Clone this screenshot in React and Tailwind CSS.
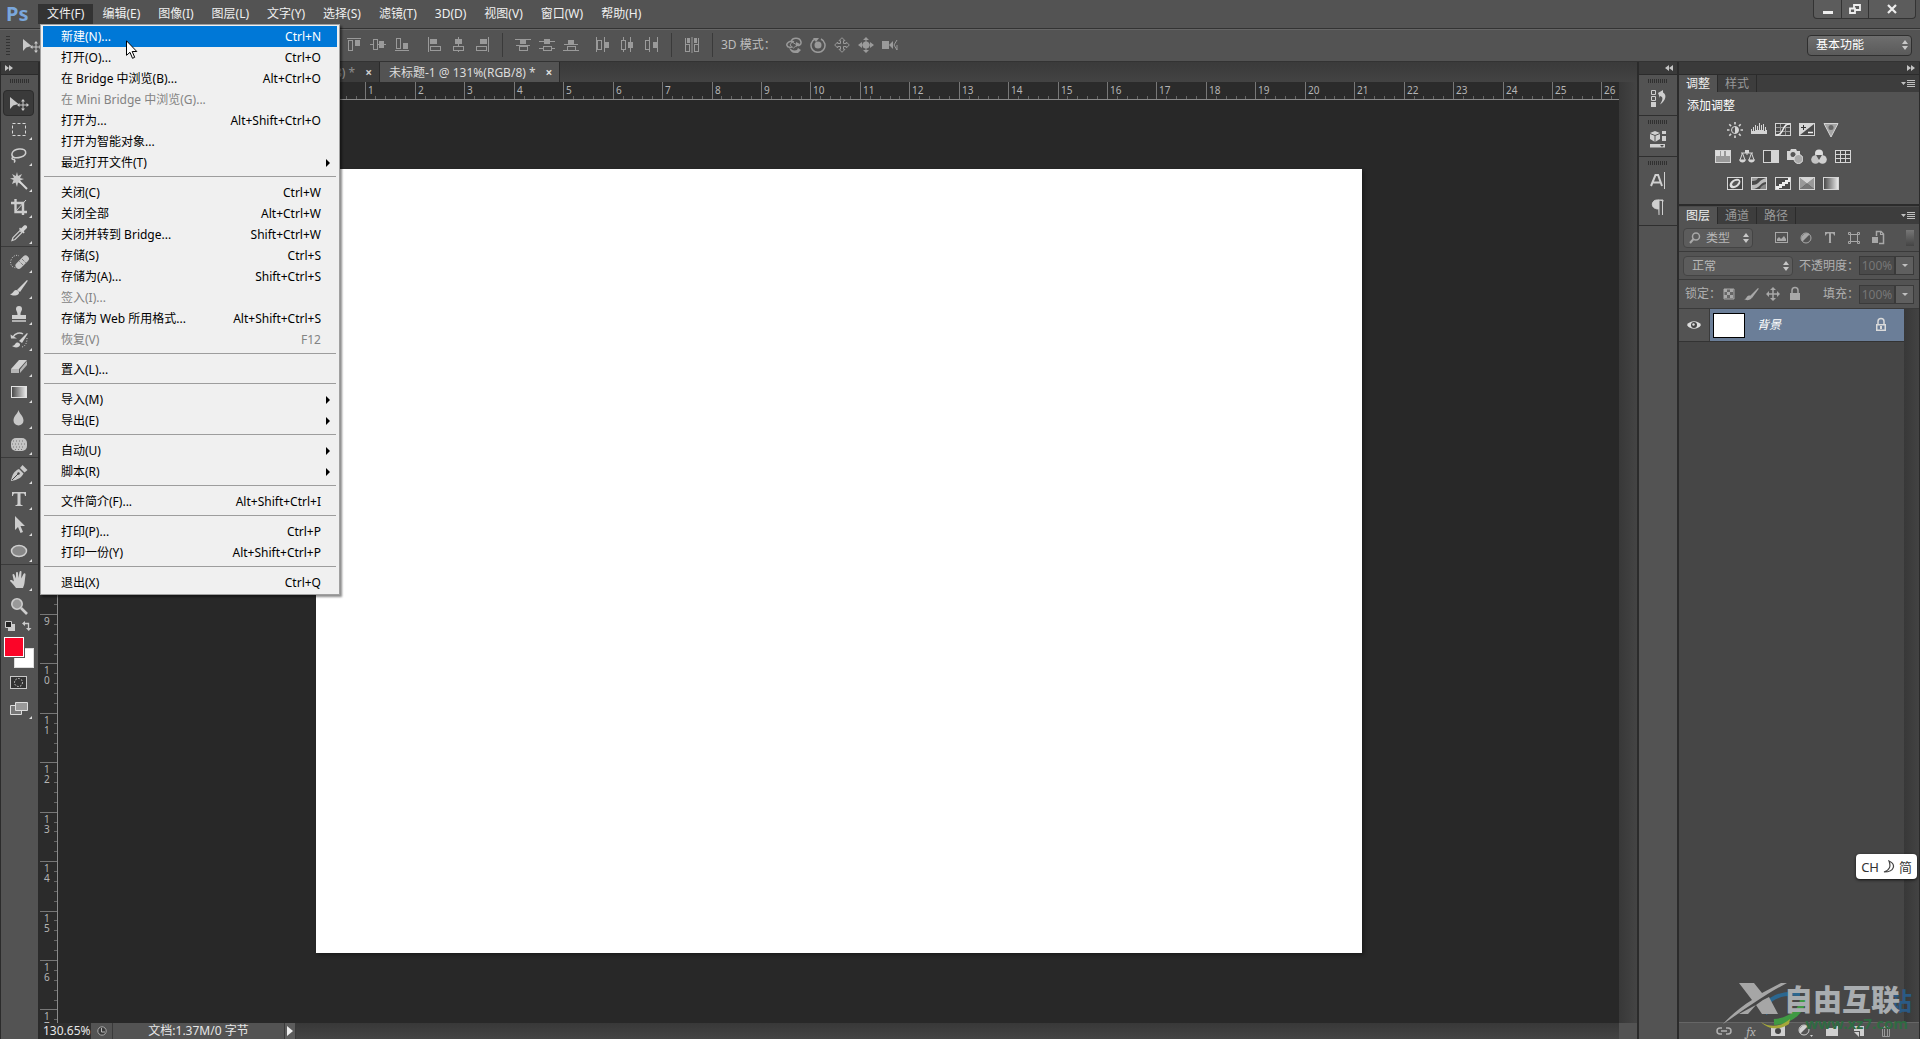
import React from "react";

const menus = ["文件(F)", "编辑(E)", "图像(I)", "图层(L)", "文字(Y)", "选择(S)", "滤镜(T)", "3D(D)", "视图(V)", "窗口(W)", "帮助(H)"];

const fileMenu = [
  [
    { label: "新建(N)...", keys: "Ctrl+N", active: true },
    { label: "打开(O)...", keys: "Ctrl+O" },
    { label: "在 Bridge 中浏览(B)...", keys: "Alt+Ctrl+O" },
    { label: "在 Mini Bridge 中浏览(G)...", disabled: true },
    { label: "打开为...", keys: "Alt+Shift+Ctrl+O" },
    { label: "打开为智能对象..." },
    { label: "最近打开文件(T)", sub: true },
  ],
  [
    { label: "关闭(C)", keys: "Ctrl+W" },
    { label: "关闭全部", keys: "Alt+Ctrl+W" },
    { label: "关闭并转到 Bridge...", keys: "Shift+Ctrl+W" },
    { label: "存储(S)", keys: "Ctrl+S" },
    { label: "存储为(A)...", keys: "Shift+Ctrl+S" },
    { label: "签入(I)...", disabled: true },
    { label: "存储为 Web 所用格式...", keys: "Alt+Shift+Ctrl+S" },
    { label: "恢复(V)", keys: "F12", disabled: true },
  ],
  [{ label: "置入(L)..." }],
  [
    { label: "导入(M)", sub: true },
    { label: "导出(E)", sub: true },
  ],
  [
    { label: "自动(U)", sub: true },
    { label: "脚本(R)", sub: true },
  ],
  [{ label: "文件简介(F)...", keys: "Alt+Shift+Ctrl+I" }],
  [
    { label: "打印(P)...", keys: "Ctrl+P" },
    { label: "打印一份(Y)", keys: "Alt+Shift+Ctrl+P" },
  ],
  [{ label: "退出(X)", keys: "Ctrl+Q" }],
];

// 20x20 drawings
const toolArt = {
  移动: (
    <>
      <path d="M1 4v12l3.200-3.500L9.500 11z" fill="#c8c8c8" />
      <path d="M14 7.500v9M9.500 12h9" stroke="#c8c8c8" fill="none" />
      <path d="M14 6l2 2.500h-4zM14 18l2-2.500h-4zM8 12l2.500-2v4zM20 12l-2.500-2v4z" fill="#c8c8c8" />
    </>
  ),
  矩形选框: <rect x="3.500" y="4.500" width="13" height="12" fill="none" stroke="#d8d8d8" strokeDasharray="3 2" />,
  套索: (
    <path d="M6 13C1 11 2 5 10 4c8-.8 9 6 2 8-3 1-6 .8-7 .3-2-.8-3 2.200-.5 2.200 2 0 1.500 2 .5 3" fill="none" stroke="#cfcfcf" strokeWidth="1.500" />
  ),
  魔棒: (
    <>
      <path d="M8 1l1 4 4-2-2 4 4 1-4 1.500 1.500 3.500L9 11.500 8 16l-1.500-4.500L3 13l1.500-4L1 7.500l4-.8L3 3l3.800 2z" fill="#c8c8c8" />
      <path d="M10 10l8 8" stroke="#d8d8d8" strokeWidth="2" />
    </>
  ),
  裁剪: (
    <>
      <path d="M6.500 2v13H18M2 6h12v12" fill="none" stroke="#cdcdcd" strokeWidth="2.400" />
      <path d="M7 14l10-11" stroke="#cdcdcd" />
    </>
  ),
  吸管: (
    <>
      <path d="M3 17.500l1-3L11 7.500l2 2-7 7z" fill="none" stroke="#cdcdcd" strokeWidth="1.200" />
      <path d="M10 6l4.500 4.500 1.200-1.200-1-1 3-3c1.500-2-1-4-2.700-2.700l-3 3-1-1z" fill="#d2d2d2" />
    </>
  ),
  修复画笔: (
    <>
      <path d="M9 15.500C3 17 0 12 2.500 7 4 3.500 8 2.500 10 4" fill="none" stroke="#cdcdcd" strokeDasharray="1 1.500" />
      <rect x="5" y="7" width="16" height="6.500" rx="3" transform="rotate(-45 13 10)" fill="#c6c6c6" />
      <path d="M10.500 9.500l3.500 3.500M13 7l3.500 3.500" stroke="#555" strokeDasharray="1 1" />
    </>
  ),
  画笔: (
    <>
      <path d="M8 12L18 2l.8.8L11 14z" fill="#d2d2d2" />
      <path d="M1 16c3 .3 3-3.500 6-4 3 0 4 3 2 4.500-2 1.500-6 1.500-8-.5z" fill="#d2d2d2" />
    </>
  ),
  仿制图章: (
    <>
      <path d="M10 2a3 3 0 0 1 3 3c0 2-1.500 2.500-1.500 6H17v4H3v-4h5.500C8.500 7.500 7 7 7 5a3 3 0 0 1 3-3z" fill="#cfcfcf" />
      <path d="M3 17h14" stroke="#cfcfcf" strokeWidth="1.500" />
    </>
  ),
  历史记录画笔: (
    <>
      <path d="M10 11l8-8 .8.800L13 13zM3 16c3 0 3-3 5-3.500 3 0 4 2.500 2 4-2 1.500-5 1-7-.5z" fill="#d2d2d2" />
      <path d="M4 7c2-4 7-5 10-3" fill="none" stroke="#cdcdcd" strokeWidth="1.500" />
      <path d="M1.500 4.500L8 8.500H2z" fill="#cdcdcd" />
      <path d="M18 8c0 4-1 8-5 9" fill="none" stroke="#cdcdcd" strokeDasharray="1 1.500" />
    </>
  ),
  橡皮擦: (
    <>
      <path d="M2 13L10 4h8l-8 9z" fill="#d2d2d2" />
      <path d="M2 13h8v4H2zM11 13.500L18 5v4l-7 8z" fill="#b5b5b5" />
    </>
  ),
  渐变: (
    <>
      <defs>
        <linearGradient id="toolGrad">
          <stop stopColor="#444" />
          <stop offset="1" stopColor="#eee" />
        </linearGradient>
      </defs>
      <rect x="2.500" y="4.500" width="15" height="11" fill="url(#toolGrad)" stroke="#e2e2e2" />
    </>
  ),
  模糊: <path d="M9.500 2c1 4 5 6 5 10.500a5 5 0 0 1-10 0C4.500 8 8.500 6 9.500 2z" fill="#c8c8c8" />,
  海绵: (
    <>
      <rect x="2" y="4" width="16" height="13" rx="5" fill="#c4c4c4" />
      <path d="M4 7h12M3 10h14M4 13h12M6 15.500h9" stroke="#777" strokeDasharray="1 2" />
    </>
  ),
  钢笔: (
    <>
      <path d="M2 18C3 12 5 8 10 6l4.500 4.500C13 14 9 17 2 18z" fill="#c9c9c9" />
      <path d="M11 5l2.500-3 5 5-3 2.500z" fill="#c9c9c9" />
      <path d="M3 17l6-6" stroke="#444" />
      <circle cx="9.500" cy="10.500" r="1.200" fill="#444" />
    </>
  ),
  文字: <path d="M3 3h14v4h-1c-.3-2-.8-2.500-2.500-2.500h-2v10c0 1.300.5 1.500 2 1.500v1h-7v-1c1.500 0 2-.2 2-1.500v-10h-2C4.800 4.500 4.300 5 4 7H3z" fill="#cdcdcd" />,
  路径选择: <path d="M6 1v14l3-3 2.500 6 2.500-1-2.500-6H16z" fill="#cdcdcd" />,
  椭圆: <ellipse cx="10" cy="10" rx="7.500" ry="5.500" fill="#888" stroke="#cfcfcf" strokeWidth="1.500" />,
  抓手: <path d="M7 18c-2-3-4-5-6-7 0-1.500 2-1.500 4 .5L3.500 5c0-1.500 1.700-1.500 2 0L7 8.500V3c0-1.500 2-1.500 2 0l.5 5L10.500 2c.3-1.500 2-1.300 2 0l-.3 6.500L14.500 4c.7-1.300 2.300-.7 2 .8L15.500 13c-.3 2-1 3.500-1.500 5z" fill="#cdcdcd" />,
  缩放: (
    <>
      <circle cx="8" cy="8" r="5.200" fill="#999" stroke="#cdcdcd" strokeWidth="1.600" />
      <path d="M12 12l6 6" stroke="#cdcdcd" strokeWidth="2.600" />
    </>
  ),
};

const toolGroups = [
  ["移动", "矩形选框", "套索", "魔棒", "裁剪", "吸管"],
  ["修复画笔", "画笔", "仿制图章", "历史记录画笔", "橡皮擦", "渐变", "模糊", "海绵"],
  ["钢笔", "文字", "路径选择", "椭圆"],
  ["抓手", "缩放"],
];

// 16x16 drawings: [line, outline box, solid box]
const alignGroups = [
  [
    ["M1 1.500h14", [2.5, 3.5, 4, 10], [9, 3, 5, 6]],
    ["M0 7.500h16", [3.5, 2.5, 4, 10], [9, 4, 5, 7]],
    ["M1 13.500h14", [2.5, 1.5, 4, 10], [9, 6, 5, 6]],
  ],
  [
    ["M2.500 0v15", [4.5, 9.5, 10, 4], [4, 2, 7, 5]],
    ["M8.500 0v15", [3.5, 9.5, 10, 4], [5, 2, 7, 5]],
    ["M14.500 0v15", [2.5, 9.5, 10, 4], [6, 2, 7, 5]],
  ],
];
const spreadGroups = [
  [
    ["M0 2.500h16M1 8.500h14", [4.5, 9.5, 8, 4], [5, 3, 6, 4]],
    ["M0 4.500h16M0 11.500h16", [4.5, 9.5, 8, 4], [5, 2, 6, 5]],
    ["M1 7.500h14M0 13.500h16", [4.5, 9.5, 8, 4], [5, 3, 6, 4]],
  ],
  [
    ["M1.500 0v15M9.500 0v15", [2.5, 3.5, 4, 9], [10, 5, 4, 6]],
    ["M4.500 0v15M11.500 0v15", [2.5, 3.5, 4, 9], [9, 5, 5, 6]],
    ["M6.500 0v15M14.500 0v15", [2.5, 3.5, 4, 9], [10, 5, 4, 6]],
  ],
];

// one centimetre at the current zoom
const UNIT = 49.44;

function Svg({ w = 16, h = 16, children, className = "" }) {
  return (
    <svg width={w} height={h} viewBox={`0 0 ${w} ${h}`} className={`block shrink-0 ${className}`} aria-hidden="true">
      {children}
    </svg>
  );
}

function AlignIcon({ art }) {
  const [line, box, solid] = art;
  return (
    <button className="flex w-6 justify-center">
      <Svg>
        <path d={line} stroke="#9a9a9a" fill="none" />
        <rect x={box[0]} y={box[1]} width={box[2]} height={box[3]} stroke="#9a9a9a" fill="#535353" />
        <rect x={solid[0]} y={solid[1]} width={solid[2]} height={solid[3]} fill="#9a9a9a" />
      </Svg>
    </button>
  );
}

function Divider() {
  return <div className="mx-2 h-6 w-px bg-[#3a3a3a]" />;
}

function Grip() {
  return (
    <div className="flex h-[11px] items-center justify-center">
      <div className="h-1 w-5 bg-[repeating-linear-gradient(90deg,#303030_0_1px,transparent_1px_2px)]" />
    </div>
  );
}

function UpDown() {
  return (
    <Svg w={6} h={10} className="pointer-events-none absolute right-1 top-1/2 -translate-y-1/2">
      <path d="M0 4l3-4 3 4zM0 6h6l-3 4z" fill="#c8c8c8" />
    </Svg>
  );
}

function FileMenu() {
  return (
    <div role="menu" className="absolute left-0.5 top-full z-20 w-[300px] border border-[#a0a0a0] bg-[#f0f0f0] px-0.5 py-px text-black shadow-[2px_2px_2px_rgba(0,0,0,0.45)]">
      {fileMenu.map((group, i) => (
        <div key={i}>
          {i > 0 && (
            <div className="h-[9px] pt-[3px]">
              <div className="mx-px h-px bg-[#9d9d9d]" />
            </div>
          )}
          {group.map((item) => (
            <button
              key={item.label}
              role="menuitem"
              disabled={item.disabled}
              className={`flex h-[21px] w-full items-center justify-between pl-[18px] ${item.sub ? "pr-[7px]" : "pr-4"} ${
                item.active ? "bg-[#0078d7] text-white" : item.disabled ? "text-[#838383]" : ""
              }`}
            >
              <span>{item.label}</span>
              {item.keys && <span>{item.keys}</span>}
              {item.sub && (
                <Svg w={4} h={8}>
                  <path d="M0 0l4 4-4 4z" />
                </Svg>
              )}
            </button>
          ))}
        </div>
      ))}
    </div>
  );
}

function MenuBar() {
  return (
    <header className="flex h-7 items-center justify-between">
      <div className="flex items-center">
        <div className="w-[38px] pl-1.5 text-[20px] font-bold leading-none text-[#7aa7dc]">Ps</div>
        <nav className="flex">
          {menus.map((m, i) => (
            <div key={m} className="relative">
              <button className={`h-5 px-[9px] text-[#f0f0f0] ${i === 0 ? "bg-[#333]" : ""}`}>{m}</button>
              {i === 0 && <FileMenu />}
            </div>
          ))}
        </nav>
      </div>
      <div className="mr-1 flex h-[19px] self-start rounded-b border border-t-0 border-[#333] bg-[#5c5c5c]">
        <button aria-label="最小化" className="flex w-7 items-center justify-center border-r border-[#333]">
          <Svg w={12} h={12}>
            <path d="M1 8h10v3H1z" fill="#eee" />
          </Svg>
        </button>
        <button aria-label="还原" className="flex w-[27px] items-center justify-center border-r border-[#333]">
          <Svg w={12} h={12}>
            <path d="M5 2h6v5H5z" fill="#5c5c5c" stroke="#eee" strokeWidth="1.800" />
            <path d="M1 5.500h5v4.500H1z" fill="#5c5c5c" stroke="#eee" strokeWidth="1.800" />
          </Svg>
        </button>
        <button aria-label="关闭" className="flex w-[46px] items-center justify-center">
          <Svg w={12} h={12}>
            <path d="M2 2l8 8M10 2l-8 8" stroke="#eee" strokeWidth="2.200" />
          </Svg>
        </button>
      </div>
    </header>
  );
}

function OptionsBar() {
  return (
    <div className="flex h-[34px] items-center justify-between border-y border-[#333] pr-2 shadow-[inset_0_1px_0_#666]">
      <div className="flex items-center">
        <div className="ml-1.5 h-5 w-1 bg-[repeating-linear-gradient(0deg,#333_0_1px,transparent_1px_3px)]" />
        <Svg w={20} h={20} className="ml-3">
          {toolArt.移动}
        </Svg>
        <div className="ml-[300px] flex gap-2">
          {alignGroups.map((g, i) => (
            <div key={i} className="flex">
              {g.map((a) => (
                <AlignIcon key={a[0]} art={a} />
              ))}
            </div>
          ))}
        </div>
        <Divider />
        <div className="flex gap-2">
          {spreadGroups.map((g, i) => (
            <div key={i} className="flex">
              {g.map((a) => (
                <AlignIcon key={a[0]} art={a} />
              ))}
            </div>
          ))}
        </div>
        <Divider />
        <button aria-label="自动对齐图层" className="flex w-6 justify-center">
          <Svg>
            <path d="M1.500 1v14M5.500 7v8M10.500 7v8M14.500 1v14M1 7.500h5M10 7.500h5M1 14.500h5M10 14.500h5M8 0v16" stroke="#9a9a9a" fill="none" />
            <path d="M3 1h3v5H3zM10 1h3v5h-3z" fill="#9a9a9a" />
          </Svg>
        </button>
        <Divider />
        <span className="mr-2.5 text-[#bdbdbd]">3D 模式：</span>
        <div className="flex gap-2 text-[#9a9a9a]">
          <Svg>
            <path d="M5 5c1-5 9-5 10 0 .5 3-2.500 4-4.500 3M8 5C4 3 0 6 1 8.500c.5 2 3 2 5 1.500" fill="none" stroke="currentColor" strokeWidth="1.500" />
            <path d="M6 5l5 3-3.500 3L4 8z" fill="none" stroke="currentColor" />
            <path d="M3 10c2 3 5 4 8 3l1-2 3 2-3 3H9c-3 0-5-2-6-6zM10 5l4 2-4 3z" fill="currentColor" />
          </Svg>
          <Svg>
            <circle cx="8" cy="8" r="3.500" fill="currentColor" />
            <path d="M5 2a7 7 0 1 0 6 0" fill="none" stroke="currentColor" strokeWidth="1.500" />
            <path d="M3 1h6L6 5z" fill="currentColor" />
          </Svg>
          <Svg>
            <path d="M8 .7l3 3H9.500v2.800h2.800V5l3 3-3 3V9.500H9.500v2.800H11l-3 3-3-3h1.500V9.500H3.700V11l-3-3 3-3v1.500h2.800V3.700H5z" fill="none" stroke="currentColor" />
          </Svg>
          <Svg>
            <circle cx="8" cy="8" r="3.500" fill="currentColor" />
            <path d="M8 0l3 3H5zM8 16l3-3H5zM0 8l4-3v6zM16 8l-4-3v6z" fill="currentColor" />
            <path d="M1 8h14M8 2v12" stroke="currentColor" />
          </Svg>
          <Svg>
            <path d="M0 4h7v8H0zM7 8l4-4v8z" fill="currentColor" />
            <path d="M15 3l-3 5 3 5V8" stroke="currentColor" fill="none" />
          </Svg>
        </div>
      </div>
      <div className="relative w-[105px]">
        <select
          aria-label="工作区"
          className="h-[21px] w-full appearance-none rounded-sm border border-[#2f2f2f] bg-linear-to-b from-[#6e6e6e] to-[#5a5a5a] pl-2 leading-none text-white"
        >
          <option>基本功能</option>
        </select>
        <UpDown />
      </div>
    </div>
  );
}

function Toolbar() {
  return (
    <aside className="flex w-10 shrink-0 flex-col border-l border-r-2 border-[#2b2b2b] bg-[#535353]">
      <div className="flex h-[13px] items-center border-b border-[#2b2b2b] bg-[#3a3a3a] pl-1">
        <Svg w={8} h={6}>
          <path d="M0 0l4 3-4 3zM4 0l4 3-4 3z" fill="#c4c4c4" />
        </Svg>
      </div>
      <div className="pb-1">
        <Grip />
      </div>
      {toolGroups.map((g, i) => (
        <div key={i} className={`px-0.5 ${i > 0 ? "border-t border-[#3a3a3a] pt-0.5" : ""}`}>
          {g.map((t) => (
            <button
              key={t}
              aria-label={t}
              className={`relative flex h-[26px] w-[31px] items-center justify-center ${
                t === "移动" ? "rounded-sm border border-[#2c2c2c] bg-[#3a3a3a]" : ""
              }`}
            >
              <Svg w={20} h={20}>{toolArt[t]}</Svg>
              {t !== "移动" && t !== "缩放" && (
                <Svg w={3} h={3} className="absolute bottom-0.5 right-0.5">
                  <path d="M3 0v3H0z" fill="#ddd" />
                </Svg>
              )}
            </button>
          ))}
        </div>
      ))}
      <div className="flex justify-between px-1 py-0.5">
        <Svg w={10} h={10}>
          <path d="M3 3h7v7H3z" fill="#ccc" />
          <path d="M.5.5h6v6h-6z" fill="#222" stroke="#ccc" />
        </Svg>
        <Svg w={10} h={10} className="mr-0.5">
          <path d="M2 2.500h4.500V8" fill="none" stroke="#ccc" strokeWidth="1.300" />
          <path d="M3 0v5L0 2.500zM4 7h5.500L6.700 10z" fill="#ccc" />
        </Svg>
      </div>
      <div className="relative ml-[3px] mt-1 h-[31px] w-[30px]">
        <button aria-label="背景色" className="absolute bottom-0 right-0 size-5 border border-[#ddd] bg-white" />
        <button aria-label="前景色" className="absolute left-0 top-0 size-5 border border-white bg-[#fb0528] outline outline-[#555]" />
      </div>
      <button aria-label="快速蒙版" className="flex h-[27px] items-center justify-center pr-0.5">
        <Svg w={18} h={14}>
          <rect x=".5" y="1.500" width="16" height="12" fill="#333" stroke="#c8c8c8" />
          <circle cx="8.500" cy="7.500" r="4" fill="none" stroke="#ddd" strokeDasharray="1.500 1.500" />
        </Svg>
      </button>
      <button aria-label="屏幕模式" className="relative flex h-[26px] items-center justify-center pr-0.5">
        <Svg w={18} h={14}>
          <path d="M.5 4.500h11v9H.5z" fill="#777" stroke="#ddd" />
          <path d="M5.500 1.500h12v8h-12z" fill="#999" stroke="#ddd" />
        </Svg>
        <Svg w={3} h={3} className="absolute bottom-0.5 right-1.5">
          <path d="M3 0v3H0z" fill="#ddd" />
        </Svg>
      </button>
    </aside>
  );
}

function TopRuler() {
  const start = 258;
  const ticks = Array.from({ length: 157 }, (_, i) => i - 25);
  return (
    <svg className="block h-[18px] min-w-0 flex-1 border-b border-[#8a8a8a] bg-[#2b2b2b]" aria-hidden="true">
      {ticks.map((t) => {
        const x = Math.round(start + (t * UNIT) / 5);
        const major = t % 5 === 0;
        return (
          <g key={t}>
            <rect x={x} y={major ? 0 : 14} width="1" height="18" fill={major ? "#777" : "#666"} />
            {major && t > 0 && (
              <text x={x + 3} y="12" fontSize="10" fill="#b5b5b5">
                {t / 5}
              </text>
            )}
          </g>
        );
      })}
    </svg>
  );
}

function SideRuler() {
  const start = 69;
  const ticks = Array.from({ length: 95 }, (_, i) => i - 6);
  return (
    <svg className="block h-full w-[18px] shrink-0 border-r border-[#8a8a8a] bg-[#2b2b2b]" aria-hidden="true">
      {ticks.map((t) => {
        const y = Math.round(start + (t * UNIT) / 5);
        const major = t % 5 === 0;
        return (
          <g key={t}>
            <rect x={major ? 0 : 14} y={y} width="18" height="1" fill={major ? "#777" : "#666"} />
            {major &&
              t >= 45 &&
              String(t / 5)
                .split("")
                .map((d, i) => (
                  <text key={i} x="4" y={y + 11 + i * 10} fontSize="10" fill="#b5b5b5">
                    {d}
                  </text>
                ))}
          </g>
        );
      })}
    </svg>
  );
}

function Document() {
  return (
    <section className="flex min-w-0 flex-1 flex-col">
      <div className="flex h-5 items-stretch bg-linear-to-b from-[#3a3a3a] to-[#434343]">
        <div className="flex w-[340px] items-center justify-end gap-2.5 border-r border-[#2b2b2b] bg-[#3c3c3c] pr-[7px] pt-0.5 text-[#8c8c8c]">
          <span>(RGB/8) *</span>
          <button aria-label="关闭标签" className="font-bold text-[#ccc]">×</button>
        </div>
        <div className="flex items-center gap-2.5 border-r border-[#2b2b2b] bg-[#535353] pl-[9px] pr-[7px] pt-0.5 text-[#dcdcdc]">
          <span>未标题-1 @ 131%(RGB/8) *</span>
          <button aria-label="关闭标签" className="font-bold">×</button>
        </div>
      </div>
      <div className="flex min-h-0 flex-1">
        <div className="flex min-w-0 flex-1 flex-col">
          <div className="flex h-[18px]">
            <div className="w-[18px] border-b border-r border-[#8a8a8a] bg-[#2b2b2b]" />
            <TopRuler />
          </div>
          <div className="flex min-h-0 flex-1">
            <SideRuler />
            <main className="flex min-w-0 flex-1 items-center justify-center overflow-hidden bg-[#282828] pb-0.5">
              <div className="h-[784px] w-[1046px] shrink-0 bg-white shadow-[2px_2px_3px_#1c1c1c]" />
            </main>
          </div>
        </div>
        <div className="w-[18px] bg-linear-to-r from-[#383838] to-[#444]" />
      </div>
      <footer className="flex h-4 text-[#e6e6e6]">
        <label className="sr-only" htmlFor="zoom">缩放比例</label>
        <input id="zoom" defaultValue="130.65%" className="w-[51px] bg-[#2e2e2e] pl-[3px]" />
        <div className="flex w-[22px] items-center justify-center border-r border-[#3a3a3a] bg-[#535353]">
          <Svg w={10} h={10}>
            <circle cx="5" cy="5" r="4.200" fill="#3a3a3a" stroke="#aaa" />
            <path d="M4.500 2v4H8" fill="none" stroke="#bbb" />
          </Svg>
        </div>
        <div className="flex w-[171px] items-center justify-center bg-[#535353]">文档:1.37M/0 字节</div>
        <button aria-label="更多" className="flex w-3 items-center justify-center border-x border-[#3a3a3a] bg-[#5c5c5c]">
          <Svg w={6} h={10}>
            <path d="M0 0l6 5-6 5z" fill="#eee" />
          </Svg>
        </button>
        <div className="flex-1 bg-linear-to-b from-[#383838] to-[#444]" />
        <div className="w-[18px] bg-[#535353]" />
      </footer>
    </section>
  );
}

function Dock() {
  return (
    <aside className="flex w-10 shrink-0 flex-col border-l-2 border-[#2b2b2b] bg-[#535353] text-[#cfcfcf]">
      <div className="flex h-[13px] items-center justify-end border-b border-[#2b2b2b] bg-[#3a3a3a] pr-1">
        <Svg w={8} h={6}>
          <path d="M4 0L0 3l4 3zM8 0L4 3l4 3z" fill="#c4c4c4" />
        </Svg>
      </div>
      <div className="h-[41px] border-b border-[#2f2f2f]">
        <Grip />
        <button aria-label="历史记录" className="flex h-6 w-full items-center justify-center">
          <Svg w={18} h={18}>
            <path d="M2.500 1.500h4v4h-4zM2.500 7.500h4v4h-4z" fill="none" stroke="currentColor" />
            <path d="M2 13h5v5H2zM9 4l5-3v2.500c4 2 3 8-3 12 3-5 3.500-7.500 0-8.500V9z" fill="currentColor" />
          </Svg>
        </button>
      </div>
      <div className="h-[41px] border-b border-[#2f2f2f]">
        <Grip />
        <button aria-label="属性" className="flex h-6 w-full items-center justify-center">
          <Svg w={18} h={18}>
            <path d="M6 1l5 2v6l-5 3-5-3V3z" fill="currentColor" />
            <path d="M1 3.500l5 2 5-2M6 5.500V12" stroke="#535353" fill="none" />
            <path d="M13 1h4v3h-4zM13 6h4v5h-4zM1 14h15v3.500H1z" fill="currentColor" />
            <path d="M11 15h4l-2 2z" fill="#444" />
          </Svg>
        </button>
      </div>
      <div className="h-[69px] border-b border-[#2f2f2f]">
        <Grip />
        <button aria-label="字符" className="flex h-[26px] w-full items-center justify-center">
          <Svg w={16} h={18}>
            <path d="M1 14L5.500 3h2.600L12 14M3 10.500h7" fill="none" stroke="currentColor" strokeWidth="2" />
            <path d="M14.500 0v17" stroke="currentColor" />
          </Svg>
        </button>
        <button aria-label="段落" className="flex h-7 w-full items-center justify-center">
          <Svg w={16} h={18}>
            <path d="M8.500 1H13v1.500M8.500 10C0 10 1 1 7 1h2v15M12.500 1v15" fill="currentColor" stroke="currentColor" />
          </Svg>
        </button>
      </div>
    </aside>
  );
}

function PanelTabs({ tabs }) {
  return (
    <div className="flex h-[17px] items-stretch justify-between bg-[#3d3d3d]">
      <div className="flex">
        {tabs.map((t, i) => (
          <button key={t} className={`border-r border-[#2b2b2b] px-[7px] leading-none ${i === 0 ? "bg-[#535353] text-[#f0f0f0]" : "text-[#999]"}`}>
            {t}
          </button>
        ))}
      </div>
      <button aria-label="面板菜单" className="pr-1">
        <Svg w={14} h={8}>
          <path d="M0 2h5L2.500 5zM6 0h8v1H6zM6 2h8v1H6zM6 4h8v1H6zM6 6h8v1H6z" fill="#c0c0c0" />
        </Svg>
      </button>
    </div>
  );
}

const frame = <rect x=".5" y="1.500" width="15" height="12" fill="#4a4a4a" stroke="#d5d5d5" />;
const adjustments = [
  [
    [
      "亮度/对比度",
      <>
        <circle cx="8" cy="8" r="3.500" fill="#555" stroke="#d5d5d5" />
        <path d="M8 4.500a3.500 3.500 0 0 1 0 7z" fill="#d5d5d5" />
        <path d="M8 0v2.500M8 13.500V16M0 8h2.500M13.500 8H16M2.300 2.300l1.800 1.800M11.900 11.900l1.800 1.800M2.300 13.700l1.800-1.800M11.900 4.100l1.800-1.800" stroke="#d5d5d5" strokeWidth="1.600" />
      </>,
    ],
    ["色阶", <path d="M0 12V7h1v2h1V5h1v4h1V3h1v5h1V4h1v4h1V1h1v7h1V3h1v5h1V2h1v7h1V5h1v3h1v4z" fill="#d5d5d5" />],
    [
      "曲线",
      <>
        {frame}
        <path d="M5.500 2v11M10.500 2v11M1 5.500h14M1 9.500h14" stroke="#999" />
        <path d="M1 13c9 0 5-11 14-11" fill="none" stroke="#eee" strokeWidth="1.500" />
      </>,
    ],
    [
      "曝光度",
      <>
        {frame}
        <path d="M1 2h14L1 13z" fill="#d5d5d5" />
        <path d="M2 5.500h5M4.500 3v5" stroke="#333" />
        <path d="M9 10.500h5" stroke="#eee" strokeWidth="1.500" />
      </>,
    ],
    [
      "自然饱和度",
      <>
        <path d="M1 1.500h14L8 15z" fill="#a5a5a5" stroke="#d5d5d5" />
        <circle cx="8" cy="5.500" r="2.500" fill="#666" />
      </>,
    ],
  ],
  [
    [
      "色相/饱和度",
      <>
        <rect x=".5" y="1.500" width="15" height="12" fill="#999" stroke="#d5d5d5" />
        <path d="M1 2h4v5H1zM6 2h3v5H6zM11 2h4v5h-4z" fill="#ddd" />
      </>,
    ],
    [
      "色彩平衡",
      <>
        <path d="M2 4h12M8 1v5M3.500 4L1 11M3.500 4L6 11M12.500 4L10 11M12.500 4L15 11" fill="none" stroke="#d5d5d5" />
        <path d="M0 10.500h7c-.5 4-6.500 4-7 0zM9 10.500h7c-.5 4-6.500 4-7 0zM6 1h4v3H6z" fill="#d5d5d5" />
      </>,
    ],
    [
      "黑白",
      <>
        {frame}
        <path d="M8 2h7v11H8z" fill="#d5d5d5" />
      </>,
    ],
    [
      "照片滤镜",
      <>
        <path d="M0 2h3l1-2h5l1 2h3v9H0z" fill="#d5d5d5" />
        <circle cx="6" cy="5.500" r="2.500" fill="#555" />
        <circle cx="11.500" cy="10" r="4.500" fill="#aaa" stroke="#e0e0e0" />
      </>,
    ],
    [
      "通道混合器",
      <>
        <circle cx="8" cy="4.500" r="4" fill="#ddd" />
        <circle cx="4.500" cy="10.500" r="4.300" fill="#c4c4c4" />
        <circle cx="11.500" cy="10.500" r="4.300" fill="#d0d0d0" />
        <path d="M5 6h6l-3 5z" fill="#555" />
      </>,
    ],
    [
      "颜色查找",
      <>
        {frame}
        <path d="M5.500 2v11M10.500 2v11M1 5.500h14M1 9.500h14" stroke="#d5d5d5" />
      </>,
    ],
  ],
  [
    [
      "反相",
      <>
        {frame}
        <path d="M1 2h8C4 4 2 8 4 13H1zM15 13H8c5-2 7-6 5-11h2z" fill="#444" />
        <ellipse cx="8" cy="7.500" rx="6" ry="4" transform="rotate(-35 8 7.500)" fill="#ddd" />
        <path d="M5 8.500C6 5 9 4 12 5c-1 3-3 5-6 5z" fill="#555" />
      </>,
    ],
    [
      "色调分离",
      <>
        {frame}
        <path d="M1 9c8 0 6-5 14-7v4c-7 1-6 7-14 7z" fill="#bbb" />
        <path d="M1 5c4 0 5-1 6-3H1z" fill="#999" />
        <path d="M9 13c1-3 3-4 6-5v5z" fill="#888" />
      </>,
    ],
    [
      "阈值",
      <>
        {frame}
        <path d="M1 10h3V8h3V6h3V4h3V2h2v4h-2v2h-3v2H7v2H4v1H1z" fill="#eee" />
      </>,
    ],
    [
      "可选颜色",
      <>
        {frame}
        <path d="M1 2l7 5.500L1 13zM15 2L8 7.500l7 5.500z" fill="#999" />
        <path d="M1 2h14L8 7.500z" fill="#d5d5d5" />
        <path d="M1 13h14L8 7.500z" fill="#777" />
      </>,
    ],
    ["渐变映射", <rect x=".5" y="1.500" width="15" height="12" fill="url(#toolGrad)" stroke="#d5d5d5" />],
  ],
];

const lock = (
  <>
    <path d="M3 7h10v7H3z" fill="currentColor" />
    <path d="M5 7V4.500c0-4 6-4 6 0V7" fill="none" stroke="currentColor" strokeWidth="1.500" />
  </>
);

function PercentField({ id, label }) {
  return (
    <div className="flex items-center">
      <label htmlFor={id}>{label}</label>
      <input id={id} disabled defaultValue="100%" className="h-[19px] w-9 border border-[#3a3a3a] bg-[#4a4a4a] text-center text-[#777]" />
      <button aria-label={`${id}-slider`} className="flex h-[19px] w-[19px] items-center justify-center border border-[#3a3a3a] bg-[#5f5f5f]">
        <Svg w={6} h={3}>
          <path d="M0 0h6L3 3z" fill="#c0c0c0" />
        </Svg>
      </button>
    </div>
  );
}

function Panels() {
  return (
    <aside className="flex w-[243px] shrink-0 flex-col border-l-2 border-r border-[#2b2b2b] bg-[#535353]">
      <div className="flex h-[13px] items-center justify-end border-b border-[#2b2b2b] bg-[#3a3a3a] pr-1">
        <Svg w={8} h={6}>
          <path d="M0 0l4 3-4 3zM4 0l4 3-4 3z" fill="#c4c4c4" />
        </Svg>
      </div>
      <PanelTabs tabs={["调整", "样式"]} />
      <div className="h-[114px] border-b-2 border-[#2b2b2b] pt-1.5">
        <h2 className="px-2 text-white">添加调整</h2>
        <div className="flex flex-col items-center gap-[11px] pr-8 pt-2">
          {adjustments.map((row, i) => (
            <div key={i} className="flex gap-2">
              {row.map(([name, art]) => (
                <button key={name} aria-label={name}>
                  <Svg>{art}</Svg>
                </button>
              ))}
            </div>
          ))}
        </div>
      </div>
      <div className="border-t border-[#4a4a4a]">
        <PanelTabs tabs={["图层", "通道", "路径"]} />
      </div>
      <div className="flex h-7 items-center justify-between border-b border-[#3a3a3a] pl-1 pr-[5px] text-[#a8a8a8]">
        <div className="relative w-[70px]">
          <Svg w={12} h={12} className="absolute left-1.5 top-1">
            <circle cx="7" cy="4.500" r="3.500" fill="none" stroke="currentColor" strokeWidth="1.500" />
            <path d="M4.500 7L1 11" stroke="currentColor" strokeWidth="2" />
          </Svg>
          <select aria-label="图层过滤" className="h-5 w-full appearance-none rounded-sm border border-[#444] bg-[#5c5c5c] pl-[22px] leading-none text-[#b8b8b8]">
            <option>类型</option>
          </select>
          <UpDown />
        </div>
        <div className="flex gap-2">
          <Svg>
            <rect x="1.500" y="2.500" width="12" height="10" fill="none" stroke="currentColor" />
            <path d="M3 11V9l2-2 2 2 3-3 2 3v2z" fill="currentColor" />
          </Svg>
          <Svg>
            <circle cx="8" cy="8" r="5" fill="none" stroke="currentColor" />
            <path d="M4.500 11.500A5 5 0 0 1 11.500 4.500z" fill="currentColor" />
          </Svg>
          <Svg>
            <path d="M3 2h10v3.500h-1C11.700 4 11.500 3.500 9 3.500V12c0 1 .5 1 1.500 1h-5c1 0 1.500 0 1.500-1V3.500C4.500 3.500 4.300 4 4 5.500H3z" fill="currentColor" />
          </Svg>
          <Svg>
            <path d="M4.500 4.500h7v7h-7z" fill="none" stroke="currentColor" />
            <path d="M2.500 2.500h2v2h-2zM11.500 2.500h2v2h-2zM2.500 11.500h2v2h-2zM11.500 11.500h2v2h-2z" fill="none" stroke="currentColor" />
          </Svg>
          <Svg>
            <path d="M6.500 6V1.500H11l2.500 2.500v9.500H9" fill="none" stroke="currentColor" strokeWidth="1.500" />
            <path d="M2 7h6v6H2zM10 1h1v3h3v1h-4z" fill="currentColor" />
          </Svg>
        </div>
        <div className="h-4 w-2 bg-linear-to-b from-[#777] to-[#444]" />
      </div>
      <div className="flex h-7 items-center justify-between border-b border-[#3a3a3a] pl-1 pr-[5px] text-[#b0b0b0]">
        <div className="relative w-[110px]">
          <select aria-label="混合模式" className="h-5 w-full appearance-none rounded-sm border border-[#444] bg-[#5c5c5c] pl-2 leading-none text-[#b8b8b8]">
            <option>正常</option>
          </select>
          <UpDown />
        </div>
        <PercentField id="opacity" label="不透明度：" />
      </div>
      <div className="flex h-[29px] items-center justify-between border-b border-[#3a3a3a] pl-1.5 pr-[5px] text-[#b0b0b0]">
        <div className="flex items-center">
          <span>锁定：</span>
          <div className="flex gap-1.5 text-[#a8a8a8]">
            <Svg>
              <path d="M3 3h10v10H3z" fill="#666" stroke="currentColor" />
              <path d="M3 3h3v3H3zM9 3h3v3H9zM6 6h3v3H6zM3 9h3v3H3zM9 9h3v3H9z" fill="currentColor" />
            </Svg>
            <Svg>
              <path d="M7 10l8-8 .8.800L9 12zM1 13c3 .3 2-3 5-3.500 2 0 3.500 2 2 3.500-2 1.500-5 1.500-7 0z" fill="currentColor" />
            </Svg>
            <Svg>
              <path d="M8 3v10M3 8h10" stroke="currentColor" strokeWidth="1.500" />
              <path d="M8 1l3 3H5zM8 15l3-3H5zM1 8l3-3v6zM15 8l-3-3v6z" fill="currentColor" />
            </Svg>
            <Svg>{lock}</Svg>
          </div>
        </div>
        <PercentField id="fill" label="填充：" />
      </div>
      <div className="flex min-h-0 flex-1">
        <div className="flex-1 bg-[#464646]">
          <div className="flex h-[33px] border-b border-[#333]">
            <button aria-label="显示图层" className="flex w-[31px] items-center justify-center border-r border-[#3a3a3a] bg-[#535353]">
              <Svg w={14} h={10}>
                <path d="M0 5c3-5 11-5 14 0-3 5-11 5-14 0z" fill="#ddd" />
                <circle cx="7" cy="5" r="3" fill="#444" />
                <circle cx="6.500" cy="4.500" r="1.200" fill="#ddd" />
              </Svg>
            </button>
            <div className="flex flex-1 items-center bg-[#6b7e98] px-[3px] text-white">
              <div className="h-[25px] w-8 border border-black bg-white" />
              <span className="ml-3 flex-1 italic">背景</span>
              <Svg className="mr-3 text-[#dadada]">
                {lock}
                <path d="M4.500 8.500h7v4h-7z" fill="#6b7e98" />
                <path d="M8 9v3" stroke="currentColor" strokeWidth="2" />
              </Svg>
            </div>
          </div>
        </div>
        <div className="w-[15px] bg-linear-to-r from-[#383838] to-[#434343]" />
      </div>
      <div className="flex h-[17px] items-center justify-center gap-[11px] border-t border-[#666] pl-3 text-[#d0d0d0]">
        <Svg>
          <path d="M6 5H4c-4 0-4 6 0 6h2M10 5h2c4 0 4 6 0 6h-2M5 8h6" fill="none" stroke="#b0b0b0" strokeWidth="1.500" />
        </Svg>
        <button aria-label="图层样式" className="w-4 font-serif text-[13px] italic leading-none text-[#b0b0b0]">fx</button>
        <Svg>
          <path d="M1 3h14v10H1z" fill="currentColor" />
          <circle cx="8" cy="8" r="3" fill="#444" />
        </Svg>
        <Svg>
          <circle cx="7" cy="7" r="5" fill="none" stroke="currentColor" />
          <path d="M3.500 10.500a5 5 0 0 1 7-7zM13 12h3l-1.500 2z" fill="currentColor" />
        </Svg>
        <Svg>
          <path d="M2 5h7l1-2h4v10H2z" fill="currentColor" />
        </Svg>
        <Svg>
          <path d="M3 3h10v10H9V8H3z" fill="currentColor" />
          <path d="M3 9h5v5z" fill="currentColor" />
        </Svg>
        <Svg>
          <path d="M3 4.500h10M6 3.500h4M4.500 6v7.500h7V6M6.500 6v7M9.500 6v7" fill="none" stroke="#999" />
        </Svg>
      </div>
    </aside>
  );
}

function Watermark() {
  return (
    <div className="pointer-events-none absolute bottom-2 right-2 flex h-12 w-[200px] items-start justify-end">
      <span className="absolute right-0 top-1.5 text-[24px] font-bold leading-none text-[#2a5a85]">站</span>
      <span className="absolute bottom-0 right-1 text-[15px] font-bold leading-none text-[#2f6b42]">www.xz7.com</span>
      <svg width="200" height="48" viewBox="0 0 200 48" className="absolute right-0 top-0" aria-hidden="true">
        <path d="M56 31c-6-9 3-22 32-20" fill="none" stroke="#2b6790" strokeWidth="4" />
        <path d="M91 13c1 13-11 25-29 26" fill="none" stroke="#3f9a43" strokeWidth="6" />
        <path d="M49 39c9 6 20 5 29-3l-1 5c-8 6-21 6-28-2z" fill="#a5a83a" />
        <path d="M27 0h15l8 10L69 0h6C54 11 36 24 11 41 19 32 30 23 40 17z" fill="#a6a6a6" />
        <path d="M51 17L57 14l9 17H50l-6-9zM40 24l4-2-8 9H27z" fill="#a6a6a6" />
      </svg>
      <span className="relative mr-3 mt-0.5 text-[29px] font-black leading-none text-[#a9adb0]">自由互联</span>
    </div>
  );
}

export default function App() {
  return (
    <div className="relative flex h-screen flex-col overflow-hidden bg-[#535353] font-['Noto_Sans','Noto_Sans_CJK_SC',sans-serif] text-[12px] leading-4">
      <MenuBar />
      <OptionsBar />
      <div className="flex min-h-0 flex-1">
        <Toolbar />
        <Document />
        <Dock />
        <Panels />
      </div>
      <Svg w={12} h={19} className="pointer-events-none absolute left-[126px] top-10 z-30">
        <path d="M.5.800v14.500l3.500-3 2.500 6 2.200-1-2.500-5.800h4.600z" fill="white" stroke="black" />
      </Svg>
      <div className="absolute bottom-40 right-[3px] flex h-[25px] items-center gap-1 rounded bg-white px-[5px] text-[13px] text-[#333] shadow-[0_1px_3px_#111]">
        <span>CH</span>
        <Svg w={12} h={14}>
          <path d="M6 1c7 3 6 11-5 11 6-2 7-6 5-11z" fill="none" stroke="#444" strokeWidth="1.200" />
        </Svg>
        <span>简</span>
      </div>
      <Watermark />
    </div>
  );
}
